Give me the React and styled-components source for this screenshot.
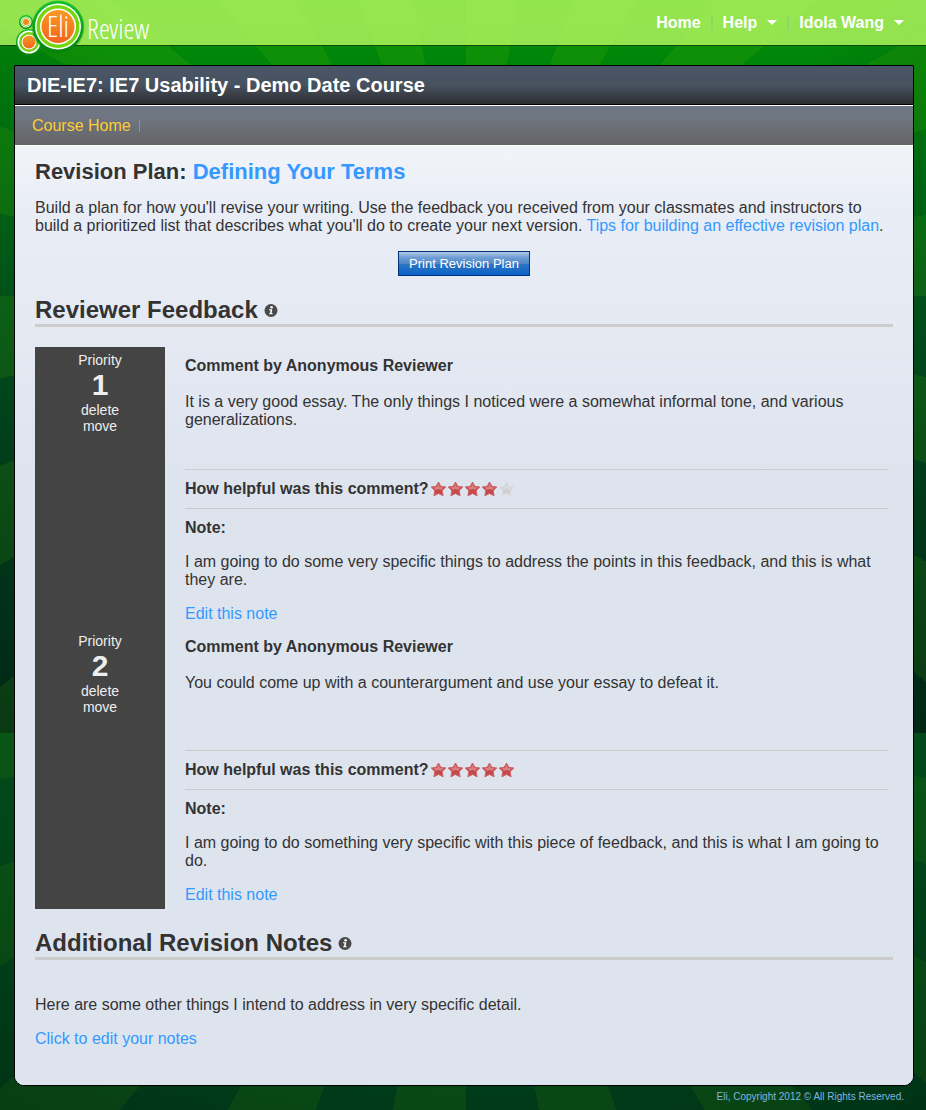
import styled, { createGlobalStyle } from 'styled-components';

const GlobalStyle = createGlobalStyle`
  * {
    box-sizing: border-box;
  }
  body {
    margin: 0;
    background: #00250f;
    color: #333;
    font-family: "Liberation Sans", Arial, Helvetica, sans-serif;
    font-size: 16px;
    line-height: 18px;
  }
  h1, h2, h3, p, ul {
    margin: 0;
    padding: 0;
  }
`

const Page = styled.div`
  min-height: 100vh;
  padding-bottom: 5px;
  background:
    radial-gradient(ellipse 700px 900px at 50% 0, transparent 50%, rgba(0, 20, 10, 0.3) 100%) 0 0 / 100% 733px no-repeat,
    repeating-conic-gradient(from 0deg at calc(50% + 3px) 296px, rgba(70, 180, 0, 0.2) 0deg 10deg, transparent 10deg 20deg) 0 0 / 100% 733px no-repeat,
    linear-gradient(#009009, #00830a 70px, #005a1c 300px, #004a1f 430px, #00301c 733px) 0 0 / 100% 733px no-repeat,
    radial-gradient(ellipse 700px 600px at 50% 0, transparent 50%, rgba(0, 20, 10, 0.3) 100%) 0 733px / 100% 377px no-repeat,
    repeating-conic-gradient(from 0deg at calc(50% + 3px) -36px, rgba(60, 150, 0, 0.16) 0deg 10deg, transparent 10deg 20deg) 0 733px / 100% 377px no-repeat,
    linear-gradient(#00511b, #003d1a) 0 733px / 100% 377px no-repeat;
`

const Header = styled.header`
  height: 46px;
  padding: 0 22px 0 14px;
  display: flex;
  justify-content: space-between;
  align-items: flex-start;
  background: rgba(184, 250, 98, 0.8);
  background-clip: padding-box;
  border-bottom: 1px solid #084d08;
`

const LogoLink = styled.a`
  display: block;
  height: 58px;
  z-index: 1;
`

const TopNav = styled.nav`
  display: flex;
  align-items: center;
  height: 45px;
  font-weight: bold;
`

const TopLink = styled.a`
  color: #fff;
  text-decoration: none;
  display: flex;
  align-items: center;
  gap: 10px;
`

const Separator = styled.span`
  width: ${props => props.w}px;
  height: ${props => props.h}px;
  margin: 0 ${props => props.gap}px;
  background: ${props => props.color};
`

const Arrow = styled.span`
  border: 5px solid transparent;
  border-top-color: #fff;
  border-bottom: 0;
`

const Panel = styled.main`
  margin: 19px 12px 0 14px;
  border: 1px solid #000;
  border-radius: 0 0 10px 10px;
  background: #dee4ee;
  overflow: hidden;
`

const TitleBar = styled.div`
  height: 39px;
  padding: 0 12px;
  display: flex;
  align-items: center;
  color: #fff;
  font-size: 20px;
  font-weight: bold;
  background: linear-gradient(#4a5667, #475260 50%, #2d2d2f);
  border-bottom: 1px solid #000;
`

const CourseNav = styled.nav`
  height: 40px;
  padding: 0 17px;
  display: flex;
  align-items: center;
  background: linear-gradient(#6e7784, #6f7682 30%, #646464);
  border-top: 1px solid #fff;
`

const CourseLink = styled.a`
  color: #ffcc33;
  text-decoration: none;
`

const Content = styled.div`
  padding: 14px 20px 21px;
  border-top: 1px solid #fff;
  background: linear-gradient(#f2f4f9, #e9edf6 60px, #dee4ee 340px);
`

const Heading = styled.h1`
  font-size: 22px;
  line-height: 24px;
`

const SectionHeading = styled.h2`
  display: flex;
  align-items: center;
  gap: 6px;
  font-size: 24px;
  line-height: 28px;
  border-bottom: 3px solid #ccc;
`

const Link = styled.a`
  color: #3399ff;
  text-decoration: none;
`

const Intro = styled.p`
  margin-top: 15px;
`

const ButtonRow = styled.div`
  display: flex;
  justify-content: center;
  margin: 16px 0 20px;
`

const PrintButton = styled.button`
  height: 25px;
  padding: 0 10px;
  border: 1px solid #003477;
  background: linear-gradient(#b0c8e6, #6d9cd3 25%, #4f87c8 50%, #2d74c2 52%, #0a64c8);
  color: #fff;
  font-family: inherit;
  font-size: 13px;
  cursor: pointer;
`

const Feedback = styled.div`
  margin: 20px 0;
`

const Item = styled.article`
  display: flex;
  min-height: 281px;
`

const Priority = styled.div`
  flex: 0 0 130px;
  padding-top: 5px;
  display: flex;
  flex-direction: column;
  align-items: center;
  background: #444;
  color: #eee;
  font-size: 14px;
  line-height: 16px;
`

const Rank = styled.strong`
  font-size: 30px;
  line-height: 34px;
`

const TextButton = styled.button`
  border: 0;
  padding: 0;
  background: none;
  color: #eee;
  font: inherit;
  cursor: pointer;
`

const Comment = styled.div`
  flex: 1;
  padding: 10px 5px 0 20px;
`

const SmallHeading = styled.h3`
  font-size: 16px;
  line-height: 18px;
`

const CommentText = styled.p`
  min-height: 68px;
  margin: 18px 0 8px;
`

const Rating = styled.div`
  height: 40px;
  margin-bottom: 10px;
  display: flex;
  align-items: center;
  gap: 1px;
  border-top: 1px solid #ccc;
  border-bottom: 1px solid #ccc;
`

const Stars = styled.span`
  display: flex;
`

const NoteText = styled.p`
  margin: 16px 0;
`

const Notes = styled.div`
  padding-top: 36px;
`

const Footer = styled.footer`
  padding: 5px 22px 0;
  text-align: right;
  font-size: 10px;
  line-height: 12px;
  color: #80b5e0;
`

const Logo = () => (
  <svg width="140" height="58" viewBox="0 0 140 58">
    <defs>
      <linearGradient id="ring" x1="0" y1="0" x2="0" y2="1">
        <stop offset="0" stopColor="#0fc62c" />
        <stop offset="1" stopColor="#03850b" />
      </linearGradient>
      <linearGradient id="orange" x1="0" y1="0" x2="0" y2="1">
        <stop offset="0" stopColor="#f99a22" />
        <stop offset="1" stopColor="#f3631f" />
      </linearGradient>
    </defs>
    <circle cx="12" cy="22" r="7" fill="url(#ring)" />
    <circle cx="12" cy="22" r="5.5" fill="#fff" />
    <circle cx="12" cy="22" r="4.7" fill="#7fd511" />
    <circle cx="12" cy="22" r="3.7" fill="#fff" />
    <circle cx="12" cy="22" r="3" fill="#f98420" />
    <circle cx="15" cy="42" r="13" fill="url(#ring)" />
    <circle cx="15" cy="42" r="11.5" fill="#fff" />
    <circle cx="15" cy="42" r="10" fill="#76d012" />
    <circle cx="15" cy="42" r="7.5" fill="#fff" />
    <circle cx="15" cy="42" r="6.5" fill="url(#orange)" />
    <circle cx="44" cy="27" r="26.5" fill="#0a7a10" opacity="0.35" />
    <circle cx="44" cy="26.5" r="25.5" fill="url(#ring)" />
    <circle cx="44" cy="26.5" r="23" fill="#fff" />
    <circle cx="44" cy="26.5" r="21.5" fill="#76d60c" />
    <circle cx="44" cy="26.5" r="18" fill="#fff" />
    <circle cx="44" cy="26.5" r="16.5" fill="url(#orange)" />
    <g fill="#fff" fontFamily="'Open Sans Condensed Light', 'Open Sans Condensed', 'Liberation Sans Narrow', sans-serif" fontWeight="300">
      <text x="44" y="37" fontSize="29" textAnchor="middle">Eli</text>
      <text x="73" y="39" fontSize="28">Review</text>
    </g>
  </svg>
)

const InfoIcon = () => (
  <svg width="14" height="14" viewBox="0 0 14 14">
    <circle cx="7" cy="7.5" r="6.5" fill="#4a4a4a" />
    <circle cx="7.6" cy="4.2" r="1.3" fill="#fff" />
    <path d="M5 6.200h3.300L7.600 10.200h1.100v1H5.200v-1h.8l.5-3H5z" fill="#fff" />
  </svg>
)

const Star = ({ on }) => (
  <svg width="17" height="16" viewBox="0 0 17 16">
    <path
      d="M8.5 1l2.300 4.300 5 .7-3.600 3.600.9 5.200-4.600-2.300-4.600 2.300.9-5.200L1.200 6l5-.7z"
      fill={on ? '#c5484b' : '#cdcfd0'}
      stroke={on ? '#cd6569' : '#dcdee0'}
      strokeLinejoin="round"
    />
    <path
      d="M8.500 2.800l1.500 3.200 3.700.5-2.700 2.300-2.500-.8-2.500.8-2.700-2.300 3.700-.5z"
      fill={on ? '#da8283' : '#dadbdc'}
    />
  </svg>
)

const comments = [
  {
    text: 'It is a very good essay. The only things I noticed were a somewhat informal tone, and various generalizations.',
    stars: 4,
    note: 'I am going to do some very specific things to address the points in this feedback, and this is what they are.',
  },
  {
    text: 'You could come up with a counterargument and use your essay to defeat it.',
    stars: 5,
    note: 'I am going to do something very specific with this piece of feedback, and this is what I am going to do.',
  },
]

const App = () => {
  return (
    <Page>
      <GlobalStyle />
      <Header>
        <LogoLink href="#" aria-label="Eli Review"><Logo /></LogoLink>
        <TopNav>
          <TopLink href="#">Home</TopLink>
          <Separator w={2} h={14} gap={10} color="#8ad86a" />
          <TopLink href="#">Help <Arrow /></TopLink>
          <Separator w={2} h={14} gap={10} color="#8ad86a" />
          <TopLink href="#">Idola Wang <Arrow /></TopLink>
        </TopNav>
      </Header>

      <Panel>
        <TitleBar>DIE-IE7: IE7 Usability - Demo Date Course</TitleBar>
        <CourseNav>
          <CourseLink href="#">Course Home</CourseLink>
          <Separator w={1} h={12} gap={8} color="#929292" />
        </CourseNav>

        <Content>
          <Heading>Revision Plan: <Link href="#">Defining Your Terms</Link></Heading>
          <Intro>
            Build a plan for how you'll revise your writing. Use the feedback you received from your classmates and
            instructors to build a prioritized list that describes what you'll do to create your next
            version. <Link href="#">Tips for building an effective revision plan</Link>.
          </Intro>
          <ButtonRow>
            <PrintButton>Print Revision Plan</PrintButton>
          </ButtonRow>

          <SectionHeading>Reviewer Feedback <InfoIcon /></SectionHeading>
          <Feedback>
            {comments.map((comment, i) => (
              <Item key={i}>
                <Priority>
                  Priority
                  <Rank>{i + 1}</Rank>
                  <TextButton>delete</TextButton>
                  <TextButton>move</TextButton>
                </Priority>
                <Comment>
                  <SmallHeading>Comment by Anonymous Reviewer</SmallHeading>
                  <CommentText>{comment.text}</CommentText>
                  <Rating>
                    <SmallHeading>How helpful was this comment?</SmallHeading>
                    <Stars>
                      {[1, 2, 3, 4, 5].map(n => <Star key={n} on={n <= comment.stars} />)}
                    </Stars>
                  </Rating>
                  <SmallHeading>Note:</SmallHeading>
                  <NoteText>{comment.note}</NoteText>
                  <Link href="#">Edit this note</Link>
                </Comment>
              </Item>
            ))}
          </Feedback>

          <SectionHeading>Additional Revision Notes <InfoIcon /></SectionHeading>
          <Notes>
            <p>Here are some other things I intend to address in very specific detail.</p>
            <NoteText><Link href="#">Click to edit your notes</Link></NoteText>
          </Notes>
        </Content>
      </Panel>
      <Footer>Eli, Copyright 2012 © All Rights Reserved.</Footer>
    </Page>
  )
}

export default App
